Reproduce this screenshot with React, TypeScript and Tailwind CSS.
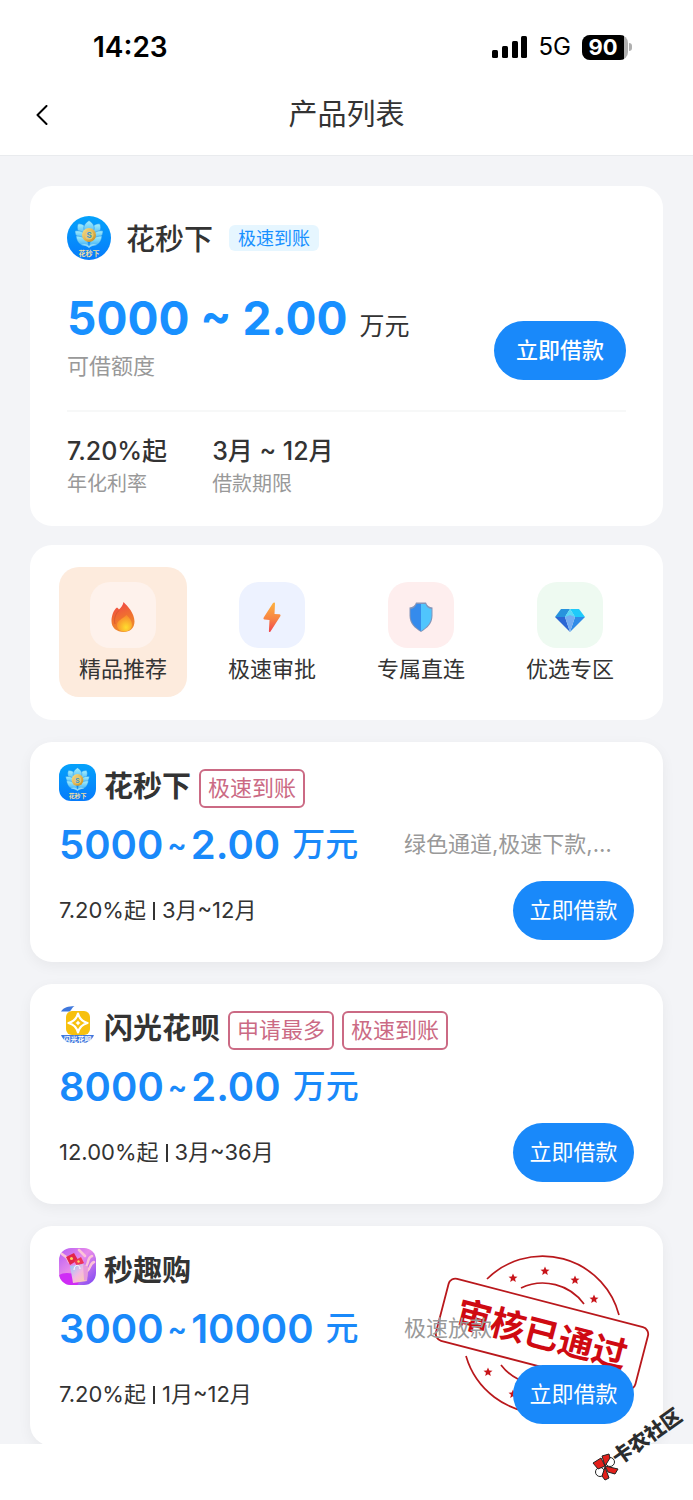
import type { ReactNode } from "react";

type Product = {
  name: string;
  logo: ReactNode;
  tags: string[];
  min: string;
  max: string;
  unit: string;
  desc?: string;
  rate: string;
  term: string;
  approved?: boolean;
};

function LotusLogo({ className }: { className: string }) {
  return (
    <svg viewBox="0 0 44 44" className={className} aria-hidden="true">
      <defs>
        <linearGradient id="lotusBg" x1="0" y1="0" x2="0" y2="1">
          <stop offset="0" stopColor="#05a2fb" />
          <stop offset="1" stopColor="#067bfb" />
        </linearGradient>
        <linearGradient id="petal" x1="0" y1="0" x2="0" y2="1">
          <stop offset="0" stopColor="#a6f0fb" />
          <stop offset="1" stopColor="#3fb0f6" />
        </linearGradient>
        <linearGradient id="coin" x1="0" y1="0" x2="1" y2="1">
          <stop offset="0" stopColor="#fbe28c" />
          <stop offset="1" stopColor="#c58a1c" />
        </linearGradient>
      </defs>
      <rect width="44" height="44" fill="url(#lotusBg)" />
      <g fill="url(#petal)" stroke="#1b8fee" strokeWidth="0.5">
        <path d="M20 20C11 19 9 13 11 8c5-1 9 3 10 9Z" />
        <path d="M24 20c9-1 11-7 9-12-5-1-9 3-10 9Z" />
        <path d="M22 19c-7-4-7-10 0-14.500 7 4.500 7 10.500 0 14.500Z" />
        <path d="M20 23C13 25 8 21 8 15c6-1 11 2 12 8Z" />
        <path d="M24 23c7 2 12-2 12-8-6-1-11 2-12 8Z" />
        <path d="M22 30C14 31 10 27 9 20c7 0 12 3 13 10Z" />
        <path d="M22 30c8 1 12-3 13-10-7 0-12 3-13 10Z" />
      </g>
      <path d="M22 32c-2-2-5-3-8-3 4-2 6-1 8 1 2-2 4-3 8-1-3 0-6 1-8 3Z" fill="#8ed9fb" />
      <circle cx="22" cy="19" r="7" fill="url(#coin)" />
      <circle cx="22" cy="19" r="4.500" fill="#e5c873" />
      <text x="22" y="22" textAnchor="middle" fontSize="8" fontWeight="700" fill="#3a97cf">S</text>
      <text x="22" y="40" textAnchor="middle" fontSize="7" fontWeight="700" fill="#f3dfa2">花秒下</text>
    </svg>
  );
}

function FlashLogo({ className }: { className: string }) {
  return (
    <svg viewBox="0 0 37 37" className={className} aria-hidden="true">
      <path d="M2 5.500C5 1 9 .5 15.500 0c-2 1-3 4-5 5.500Z" fill="#3f78dd" />
      <rect x="7" y="5" width="24" height="24" rx="6" fill="#f7c00d" />
      <path
        d="M19 7.500c1.500 5.500 4 8 9.500 9.500-5.500 1.500-8 4-9.500 9.500-1.500-5.500-4-8-9.500-9.500 5.500-1.500 8-4 9.500-9.500Z"
        fill="#f7c00d"
        stroke="#fff"
        strokeWidth="2.200"
        strokeLinejoin="round"
      />
      <path d="M19 14.500l1 1.500 1.500 1-1.500 1-1 1.500-1-1.500-1.500-1 1.500-1Z" fill="#fff" />
      <path d="M2 29h33c-2 5-6 8-11 8H13C8 37 4 34 2 29Z" fill="#3f78dd" />
      <text x="18.500" y="35.500" textAnchor="middle" fontSize="7" fontWeight="700" fill="#fff">闪光花呗</text>
    </svg>
  );
}

function ShopLogo({ className }: { className: string }) {
  return (
    <svg viewBox="0 0 37 37" className={className} aria-hidden="true">
      <defs>
        <linearGradient id="shopBg" x1="0" y1="0" x2="1" y2="1">
          <stop offset="0" stopColor="#b45cf5" />
          <stop offset="0.450" stopColor="#e98bea" />
          <stop offset="1" stopColor="#7b43f3" />
        </linearGradient>
        <linearGradient id="bag" x1="0" y1="0" x2="1" y2="1">
          <stop offset="0" stopColor="#8fc9fb" />
          <stop offset="0.500" stopColor="#f5b8e2" />
          <stop offset="1" stopColor="#fbd6a0" />
        </linearGradient>
      </defs>
      <rect width="37" height="37" fill="url(#shopBg)" />
      <ellipse cx="8" cy="33" rx="12" ry="8" fill="#cf2cf5" />
      <path
        d="M3 6c3 3 6 2 7 8M20 2l6 6M33 8c-6 2-2 9-8 12M35 14c-5 2-3 7-7 9"
        stroke="#fcc3d8"
        strokeWidth="2.500"
        fill="none"
        strokeLinecap="round"
      />
      <path d="M7 9l8-4 4 7-8 5Z" fill="#e3244b" />
      <path d="M15 13l7-4 3 6-7 3Z" fill="#ee3559" />
      <circle cx="12.500" cy="10.500" r="1.500" fill="#fbd162" />
      <circle cx="19.500" cy="13.500" r="1.200" fill="#fbd162" />
      <path d="M11 18l13-2 5 3-1 14-14 2Z" fill="url(#bag)" />
      <path d="M24 16l5 3-1 14-3-1Z" fill="#e79bdc" />
      <path d="M15 22c0-6 6-6 6-1" stroke="#fff" strokeWidth="1" fill="none" />
    </svg>
  );
}

function FireIcon() {
  return (
    <svg viewBox="0 0 32 32" className="size-8" aria-hidden="true">
      <defs>
        <linearGradient id="fireOuter" x1="0" y1="0" x2="0.300" y2="1">
          <stop offset="0" stopColor="#f0414b" />
          <stop offset="0.600" stopColor="#f0702f" />
          <stop offset="1" stopColor="#ef8a2d" />
        </linearGradient>
        <radialGradient id="fireInner" cx="0.600" cy="0.750" r="0.700">
          <stop offset="0" stopColor="#fedd2e" />
          <stop offset="1" stopColor="#f98a2c" />
        </radialGradient>
      </defs>
      <path
        d="M16.500 1c4 4 11 11 11 19.500C27.500 27 23 31 16.500 31S4.500 27 4.500 20c0-5 2-11 5.500-13.500 1 .5 1.500 1.500 2 2C14 6.500 16 4 16.500 1Z"
        fill="url(#fireOuter)"
      />
      <path d="M12.500 9C9 12 6.500 17 8 23" stroke="#d95a31" strokeWidth="1" fill="none" />
      <path d="M19.500 14c3 3 5.500 6 5.500 9.500 0 4-3 7-7.500 7S10 28 10 24c0-5 6-6 9.500-10Z" fill="url(#fireInner)" />
    </svg>
  );
}

function BoltIcon() {
  return (
    <svg viewBox="0 0 32 32" className="size-8" aria-hidden="true">
      <defs>
        <linearGradient id="bolt" x1="0" y1="0" x2="0" y2="1">
          <stop offset="0" stopColor="#fdb23f" />
          <stop offset="0.550" stopColor="#f88443" />
          <stop offset="1" stopColor="#f0444f" />
        </linearGradient>
      </defs>
      <path
        d="M17 2c1-1 2-.5 2 .5L18.500 13l5 .3c1 0 1.300 1 .8 2L14.500 30.500c-.7 1-1.700.5-1.600-.6L13.500 19l-5-.4c-1 0-1.300-1-.8-2Z"
        fill="url(#bolt)"
      />
    </svg>
  );
}

function ShieldIcon() {
  return (
    <svg viewBox="0 0 32 32" className="size-8" aria-hidden="true">
      <path d="M16 1.500h5c1 3 3 4.500 6.500 5v8c0 8-5 12.500-11.500 16.500C9.500 27 4.500 22.500 4.500 14.500v-8C8 6 10 4.500 11 1.500Z" fill="#8494b8" />
      <path d="M16 3h-4.500C10.500 6 8.500 7.500 5.500 8v6.500C5.500 21.500 10 26 16 30Z" fill="#358bec" />
      <path d="M16 3h4.500c1 3 3 4.500 6 5v6.500c0 7-4.500 11.500-10.500 15.500Z" fill="#50c5fd" />
    </svg>
  );
}

function GemIcon() {
  return (
    <svg viewBox="0 0 32 32" className="size-8" aria-hidden="true">
      <path d="M7 8h9l-5 8H1Z" fill="#2793dd" />
      <path d="M16 8h9l6 8H21Z" fill="#1fcafa" />
      <path d="M16 8l5 8H11Z" fill="#5ad9f5" />
      <path d="M1 16h10l5 15Z" fill="#2b66d3" />
      <path d="M31 16H21l-5 15Z" fill="#2f8be8" />
      <path d="M11 16l5-6 5 6-5 15Z" fill="#74acf2" />
      <path d="M16 9l5 7-5-2-5 2Z" fill="#5ad9f5" />
    </svg>
  );
}

const stars = [
  [80, 27],
  [112, 20],
  [142, 29],
  [161, 48],
  [55, 121],
  [80, 143],
];

function ApprovedStamp() {
  return (
    <svg
      viewBox="0 0 218 166"
      className="absolute right-3 top-[25px] h-[166px] w-[218px]"
      role="img"
      aria-label="审核已通过"
    >
      <g fill="none" stroke="#b9181c" strokeWidth="1.700">
        <path d="M54 28A79 79 0 0 1 186 64" />
        <path d="M33 105A79 79 0 0 0 109 162" />
        <path d="M88 37A51 51 0 0 1 151 53" />
        <path d="M68 114A51 51 0 0 0 109 134" />
      </g>
      {stars.map(([x, y]) => (
        <path
          key={`${x}-${y}`}
          transform={`translate(${x} ${y})`}
          d="M0-4.500 1.300-1.400 4.500-1.200 2 .8 2.800 4 0 2.200-2.800 4-2 .8-4.500-1.200-1.300-1.400Z"
          fill="#c8141a"
        />
      ))}
      <g transform="rotate(14.600 109 83)">
        <rect x="6" y="51" width="206" height="64" rx="7" fill="none" stroke="#b9181c" strokeWidth="1.800" />
        <text x="109" y="96" textAnchor="middle" fontSize="35" fontWeight="700" fill="#cf0a12">审核已通过</text>
      </g>
    </svg>
  );
}

function Watermark() {
  return (
    <svg
      viewBox="0 0 100 80"
      className="absolute -top-10 right-1 h-20 w-[100px]"
      role="img"
      aria-label="卡农社区"
    >
      <g stroke="#222" strokeWidth="1">
        <circle cx="11" cy="68" r="4.500" fill="#fff" />
        <circle cx="21" cy="58" r="4.500" fill="#fff" />
        <path d="M4 59l8-5 4 8-7 3Z" fill="#e3201b" />
        <path d="M13 52l7-2 1 4-5 8Z" fill="#e3201b" />
        <path d="M16 62l13 3-3 5-7-2Z" fill="#e3201b" />
        <path d="M16 63l4 11-4 2-3-4Z" fill="#e3201b" />
      </g>
      <g transform="rotate(-35.500 15 62)">
        <text x="27" y="70" fontSize="20" fontWeight="900" fill="#2b2d2e">卡农社区</text>
      </g>
    </svg>
  );
}

const categories = [
  { name: "精品推荐", icon: <FireIcon />, box: "bg-[#fef2ec]", active: true },
  { name: "极速审批", icon: <BoltIcon />, box: "bg-[#edf2ff]", active: false },
  { name: "专属直连", icon: <ShieldIcon />, box: "bg-[#feeeee]", active: false },
  { name: "优选专区", icon: <GemIcon />, box: "bg-[#eefaf1]", active: false },
];

const products: Product[] = [
  {
    name: "花秒下",
    logo: <LotusLogo className="size-[37px] rounded-xl" />,
    tags: ["极速到账"],
    min: "5000",
    max: "2.00",
    unit: "万元",
    desc: "绿色通道,极速下款,…",
    rate: "7.20%起",
    term: "3月~12月",
  },
  {
    name: "闪光花呗",
    logo: <FlashLogo className="size-[37px]" />,
    tags: ["申请最多", "极速到账"],
    min: "8000",
    max: "2.00",
    unit: "万元",
    rate: "12.00%起",
    term: "3月~36月",
  },
  {
    name: "秒趣购",
    logo: <ShopLogo className="size-[37px] rounded-xl" />,
    tags: [],
    min: "3000",
    max: "10000",
    unit: "元",
    desc: "极速放款",
    rate: "7.20%起",
    term: "1月~12月",
    approved: true,
  },
];

function StatusBar() {
  return (
    <div className="flex items-center justify-between pl-[93px] pr-[61px] pt-7 text-black">
      <span className="text-[28px] font-semibold leading-[38px]">14:23</span>
      <div className="flex items-center">
        <svg viewBox="0 0 36 22" className="h-[22px] w-9" aria-hidden="true">
          <rect x="0" y="14" width="6" height="8" rx="1.500" />
          <rect x="10" y="10" width="6" height="12" rx="1.500" />
          <rect x="20" y="5" width="6" height="17" rx="1.500" />
          <rect x="29" y="0" width="6" height="22" rx="1.500" />
        </svg>
        <span className="ml-[11px] text-2xl leading-[38px]">5G</span>
        <div className="ml-[11px] flex h-[25px] w-[46px] overflow-hidden rounded-lg bg-[#b0b0b0]">
          <span className="w-[42px] bg-black text-center text-[22px] font-bold leading-[25px] text-white">90</span>
        </div>
        <span className="ml-px h-2 w-[3px] rounded-r-full bg-[#b0b0b0]" />
      </div>
    </div>
  );
}

function FeaturedCard() {
  return (
    <section className="rounded-[22px] bg-white px-[37px] pb-[27px] pt-[30px]">
      <div className="flex h-11 items-center">
        <LotusLogo className="size-11 rounded-full" />
        <h2 className="ml-[15px] pt-1 text-[29px] font-medium leading-[44px]">花秒下</h2>
        <span className="ml-4 rounded-md bg-[#e6f6ff] px-[9px] pt-0.5 text-lg leading-6 text-[#1890ff]">极速到账</span>
      </div>
      <div className="mt-[30px] flex items-end justify-between">
        <div>
          <p className="flex items-baseline">
            <span className="text-[46px] font-bold leading-[56px] text-[#1890ff]">5000 ~ 2.00</span>
            <span className="ml-3 text-[25px] leading-none">万元</span>
          </p>
          <p className="mt-1 text-[22px] leading-[32px] text-[#999]">可借额度</p>
        </div>
        <button type="button" className="mb-0.5 h-[59px] w-[132px] rounded-full bg-[#1989fa] text-[22px] font-medium text-white">
          立即借款
        </button>
      </div>
      <dl className="mt-7 flex gap-[45px] border-t-2 border-[#f7f8f8] pt-[21px]">
        <div className="flex flex-col-reverse">
          <dt className="text-xl leading-[30px] text-[#999]">年化利率</dt>
          <dd className="text-[25px] font-medium leading-[36px]">7.20%起</dd>
        </div>
        <div className="flex flex-col-reverse">
          <dt className="text-xl leading-[30px] text-[#999]">借款期限</dt>
          <dd className="text-[25px] font-medium leading-[36px]">3月 ~ 12月</dd>
        </div>
      </dl>
    </section>
  );
}

function CategoryNav() {
  return (
    <nav className="mt-[19px] grid grid-cols-4 gap-[21px] rounded-[22px] bg-white px-[29px] pb-[23px] pt-[22px]">
      {categories.map((c) => (
        <button
          key={c.name}
          type="button"
          className={`flex flex-col items-center rounded-[20px] pb-3 pt-[15px] ${c.active ? "bg-[#fdebdd]" : ""}`}
        >
          <span className={`flex size-[66px] items-center justify-center rounded-[20px] pt-1 ${c.box}`}>{c.icon}</span>
          <span className="mt-[5px] text-[22px] leading-[32px]">{c.name}</span>
        </button>
      ))}
    </nav>
  );
}

function ProductCard({ product }: { product: Product }) {
  return (
    <article className="relative rounded-[22px] bg-white px-[29px] py-[22px] shadow-[0_4px_14px_rgba(0,0,0,0.05)]">
      {product.approved && <ApprovedStamp />}
      <div className="flex h-11 items-start gap-2">
        {product.logo}
        <h3 className="text-[29px] font-bold leading-[46px]">{product.name}</h3>
        {product.tags.map((tag) => (
          <span key={tag} className="mt-[5px] rounded-md border-2 border-[#cb6a84] px-[7px] text-[22px] leading-[35px] text-[#cb6a84]">
            {tag}
          </span>
        ))}
      </div>
      <div className="relative grid h-[73px] grid-cols-[3fr_2fr] items-center">
        <p className="flex items-center text-[#1989fa]">
          <span className="text-[40px] font-semibold">{product.min}</span>
          <span className="mx-1 text-[29px] font-semibold">~</span>
          <span className="text-[40px] font-semibold">{product.max}</span>
          <span className="ml-3 text-[33px] font-medium">{product.unit}</span>
        </p>
        <p className="truncate text-[22px] text-[#999]">{product.desc}</p>
      </div>
      <div className="relative flex items-center justify-between">
        <p className="flex items-center gap-[7px] text-[22px]">
          {product.rate}
          <span className="h-[18px] w-[2px] bg-[#333]" />
          {product.term}
        </p>
        <button type="button" className="h-[59px] w-[121px] rounded-full bg-[#1989fa] text-[22px] text-white">
          立即借款
        </button>
      </div>
    </article>
  );
}

export default function App() {
  return (
    <div lang="zh-CN" className="min-h-screen overflow-x-hidden bg-white font-['Inter','Noto_Sans_CJK_SC',sans-serif] text-[#333]">
      <header className="border-b border-[#e9ebee]">
        <StatusBar />
        <div className="grid grid-cols-[60px_1fr_60px] items-center pb-4 pt-6">
          <button type="button" aria-label="返回" className="flex justify-end pr-3">
            <svg
              viewBox="0 0 12 20"
              className="h-5 w-3"
              fill="none"
              stroke="#000"
              strokeWidth="2"
              strokeLinecap="round"
              strokeLinejoin="round"
            >
              <path d="M10.500 1 1.500 10l9 9" />
            </svg>
          </button>
          <h1 className="text-center text-[29px] leading-[49px]">产品列表</h1>
        </div>
      </header>
      <main className="overflow-hidden bg-[#f3f4f7] px-[30px] pt-[30px]">
        <FeaturedCard />
        <CategoryNav />
        <div className="-mb-0.5 mt-[22px] flex flex-col gap-[22px]">
          {products.map((product) => (
            <ProductCard key={product.name} product={product} />
          ))}
        </div>
      </main>
      <footer className="relative h-14">
        <Watermark />
      </footer>
    </div>
  );
}
